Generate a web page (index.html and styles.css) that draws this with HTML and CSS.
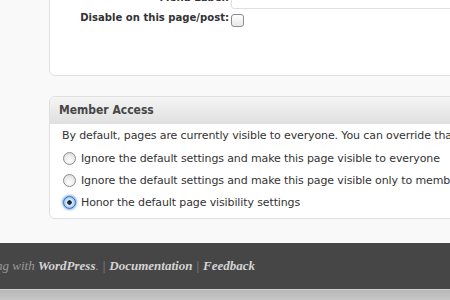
FILE: index.html
```html
<!DOCTYPE html>
<html lang="en">
  <head>
    <meta charset="UTF-8" />
    <title>Edit Page</title>
    <link rel="stylesheet" href="styles.css">
  </head>
  <body>
    <div class="wrap">
      <!-- Caja de opciones del menú -->
      <div class="postbox menu-box">
        <div class="field-row">
          <label class="field-label" for="menuLabel">Menu Label:</label>
          <input type="text" id="menuLabel" class="text-input" />
        </div>
        <div class="field-row">
          <label class="field-label" for="disableMenu">Disable on this page/post:</label>
          <span class="check"></span>
        </div>
      </div>

      <!-- Acceso de miembros -->
      <div class="postbox access-box">
        <h3 class="box-title">Member Access</h3>
        <div class="box-inside">
          <p>By default, pages are currently visible to everyone. You can override that setting below.</p>
          <label class="radio-row"><span class="radio"></span>Ignore the default settings and make this page visible to everyone</label>
          <label class="radio-row"><span class="radio"></span>Ignore the default settings and make this page visible only to members</label>
          <label class="radio-row"><span class="radio checked"></span>Honor the default page visibility settings</label>
        </div>
      </div>
    </div>

    <div class="footer">
      <p class="footer-text">
        <span>Thank you for creating with <a href="#">WordPress</a>.</span>
        <span class="sep">|</span>
        <a href="#">Documentation</a>
        <span class="sep">|</span>
        <a href="#">Feedback</a>
      </p>
    </div>
    <div class="footer-bottom"></div>
  </body>
</html>
```

FILE: styles.css
```css
body {
  margin: 0;
  background-color: #f9f9f9;
  font-family: "DejaVu Sans", sans-serif;
  font-size: 11px;
  letter-spacing: -0.12px;
  color: #333;
  overflow: hidden;
}

.wrap {
  padding-left: 49px;
  width: 600px;
}

.postbox {
  background-color: #fff;
  border: 1px solid #dfdfdf;
  border-radius: 6px;
}

/* Caja superior, cortada arriba */
.menu-box {
  margin-top: -22px;
  height: 96px;
  border-top-left-radius: 0;
}

.field-row {
  display: grid;
  grid-template-columns: 179px 1fr;
  column-gap: 2px;
  align-items: start;
  margin-top: 2px;
}

.field-label {
  text-align: right;
  font-family: "DejaVu Sans Condensed", "DejaVu Sans", sans-serif;
  font-stretch: semi-condensed;
  font-weight: bold;
  font-size: 11.2px;
  letter-spacing: 0;
  color: #333;
}

.field-row:first-child .field-label {
  padding-top: 10px;
}

.text-input {
  height: 28px;
  margin: 0;
  border: 1px solid #dfdfdf;
  border-radius: 3px;
  box-sizing: border-box;
}

.check {
  display: inline-block;
  width: 11px;
  height: 11px;
  border: 1px solid #8d8d8d;
  border-radius: 3px;
  background: linear-gradient(#fff, #e8e8e8);
  margin-top: 3px;
}

.access-box {
  margin-top: 20px;
}

.box-title {
  margin: 0;
  height: 26px;
  line-height: 26px;
  padding-left: 9px;
  font-family: "DejaVu Sans Condensed", "DejaVu Sans", sans-serif;
  font-stretch: semi-condensed;
  font-size: 12px;
  letter-spacing: 0;
  color: #464646;
  background: linear-gradient(#f5f5f5, #e0e0e0);
  border-bottom: 1px solid #dfdfdf;
  border-radius: 6px 6px 0 0;
}

.box-inside {
  padding: 1px 0 5px 12px;
}

.box-inside p {
  margin: 0;
  line-height: 22px;
  white-space: nowrap;
}

.radio-row {
  display: flex;
  align-items: center;
  height: 22px;
  white-space: nowrap;
}

.radio {
  width: 11px;
  height: 11px;
  margin: 0 5px 0 1px;
  border: 1px solid #8a8a8a;
  border-radius: 50%;
  background: radial-gradient(circle at 50% 70%, #fff, #d9d9d9);
  flex-shrink: 0;
}

.radio.checked {
  border-color: #2d6bbd;
  background: radial-gradient(circle, #1c2d4a 0, #1c2d4a 2px, #e6f0fb 2.5px, #9cc3ef 70%, #5b94dc 100%);
  box-shadow: 0 0 2px 1px #7eb0ee;
}

.footer {
  margin-top: 24px;
  height: 46px;
  background-color: #464646;
  display: flex;
  align-items: center;
}

.footer-text {
  width: 255px;
  margin: 0;
  display: flex;
  justify-content: flex-end;
  gap: 4px;
  white-space: nowrap;
  font-family: "Liberation Serif", serif;
  font-style: italic;
  font-size: 13px;
  letter-spacing: 0;
  color: #9a9a9a;
}

.footer-text a {
  color: #d4d4d4;
  text-decoration: none;
  font-weight: bold;
}

.footer-text .sep {
  font-style: normal;
  color: #8a8a8a;
}

.footer-bottom {
  height: 11px;
  border-top: 1px solid #cfcfcf;
  background: linear-gradient(#b8b8b8, #c8c8c8);
}
```
